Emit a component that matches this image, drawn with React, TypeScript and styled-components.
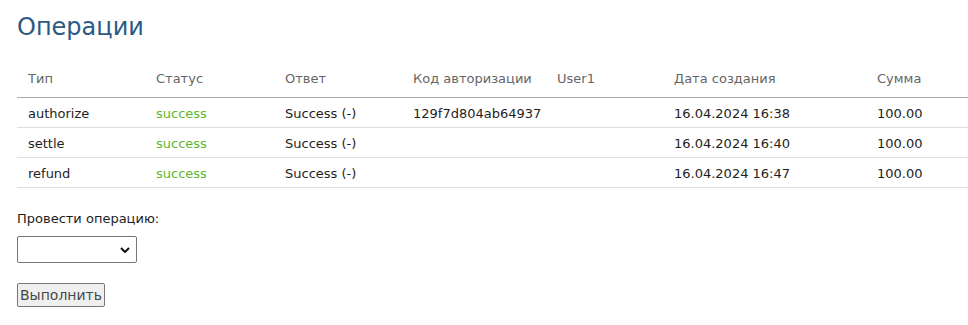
import React from "react";
import styled, { createGlobalStyle } from "styled-components";

const GlobalStyle = createGlobalStyle`
	body {
		margin: 0;
		background: #ffffff;
		font-family: "DejaVu Sans", Tahoma, sans-serif;
		font-size: 13px;
		color: #1e1e1e;
	}
`;

const Page = styled.div`
	padding: 13px 0 0 17px;
`;

const Title = styled.h1`
	margin: 0 0 19px;
	font-size: 24px;
	line-height: 29px;
	font-weight: normal;
	color: #2b5a84;
`;

const Table = styled.table`
	width: 100%;
	border-collapse: collapse;
	table-layout: fixed;
`;

const HeadCell = styled.th<{ $w?: number }>`
	width: ${(p) => (p.$w ? `${p.$w}px` : "auto")};
	box-sizing: border-box;
	padding: 10px 11px;
	line-height: 16px;
	text-align: left;
	font-weight: normal;
	color: #666666;
	border-bottom: 1px solid #acacac;
	white-space: nowrap;
`;

const Row = styled.tr`
	border-bottom: 1px solid #dedede;
`;

const Cell = styled.td<{ $ok?: boolean }>`
	height: 30px;
	box-sizing: border-box;
	padding: 1px 11px 0;
	line-height: 17px;
	color: ${(p) => (p.$ok ? "#5cb82c" : "#1e1e1e")};
	white-space: nowrap;
`;

const Form = styled.div`
	display: flex;
	flex-direction: column;
	align-items: flex-start;
	padding-top: 23px;
`;

const Label = styled.div`
	line-height: 16px;
	margin-bottom: 9px;
`;

const SelectWrap = styled.div`
	position: relative;
	margin-bottom: 20px;
`;

const Select = styled.select`
	display: block;
	appearance: none;
	width: 120px;
	height: 27px;
	box-sizing: border-box;
	border: 1px solid #767676;
	border-radius: 2px;
	background: #ffffff;
	font-family: inherit;
	font-size: 13px;
`;

const Chevron = styled.svg`
	position: absolute;
	right: 7px;
	top: 11px;
	pointer-events: none;
`;

const Button = styled.button`
	height: 24px;
	padding: 0 2px;
	box-sizing: border-box;
	border: 1px solid #767676;
	border-radius: 2px;
	background: #efefef;
	color: #474747;
	font-family: inherit;
	font-size: 14px;
	line-height: 20px;
`;

const columns = [
	{ title: "Тип", w: 128 },
	{ title: "Статус", w: 129 },
	{ title: "Ответ", w: 128 },
	{ title: "Код авторизации", w: 144 },
	{ title: "User1", w: 117 },
	{ title: "Дата создания", w: 203 },
	{ title: "Сумма" },
];

const operations = [
	{ type: "authorize", status: "success", answer: "Success (-)", code: "129f7d804ab64937", user: "", date: "16.04.2024 16:38", sum: "100.00" },
	{ type: "settle", status: "success", answer: "Success (-)", code: "", user: "", date: "16.04.2024 16:40", sum: "100.00" },
	{ type: "refund", status: "success", answer: "Success (-)", code: "", user: "", date: "16.04.2024 16:47", sum: "100.00" },
];

const App: React.FC = () => {
	return (
		<Page>
			<GlobalStyle />
			<Title>Операции</Title>
			<Table>
				<thead>
					<tr>
						{columns.map((c) => (
							<HeadCell key={c.title} $w={c.w}>
								{c.title}
							</HeadCell>
						))}
					</tr>
				</thead>
				<tbody>
					{operations.map((op) => (
						<Row key={op.type}>
							<Cell>{op.type}</Cell>
							<Cell $ok>{op.status}</Cell>
							<Cell>{op.answer}</Cell>
							<Cell>{op.code}</Cell>
							<Cell>{op.user}</Cell>
							<Cell>{op.date}</Cell>
							<Cell>{op.sum}</Cell>
						</Row>
					))}
				</tbody>
			</Table>
			<Form>
				<Label>Провести операцию:</Label>
				<SelectWrap>
					<Select>
						<option value=""></option>
					</Select>
					<Chevron width="10" height="6" viewBox="0 0 10 6">
						<path d="M1 1l4 4 4-4" fill="none" stroke="#111" strokeWidth="2" />
					</Chevron>
				</SelectWrap>
				<Button>Выполнить</Button>
			</Form>
		</Page>
	);
};

export default App;
